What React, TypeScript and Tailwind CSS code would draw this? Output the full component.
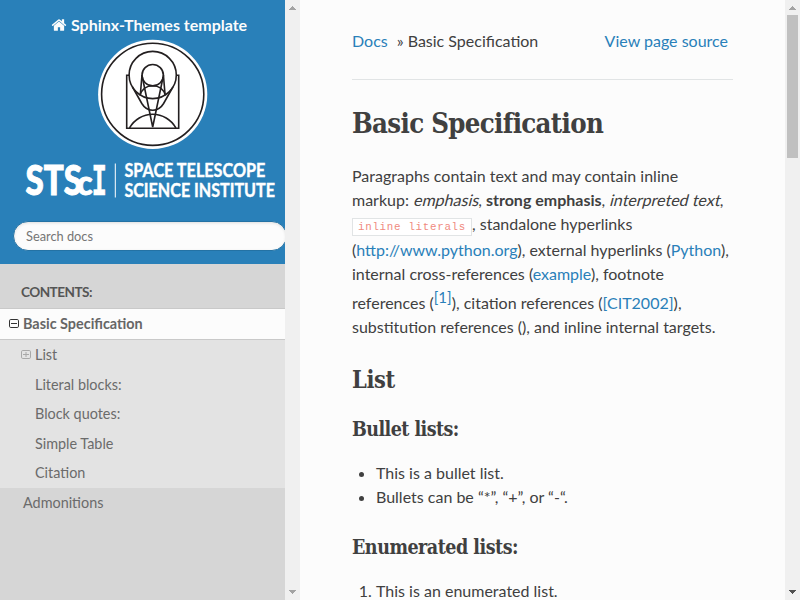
import React from "react";

const HOME_PATH =
  "M1472 992v480q0 26-19 45t-45 19h-384v-384h-256v384h-384q-26 0-45-19t-19-45v-480q0-1 .5-3t.5-3l575-474 575 474q1 2 1 6zm223-69l-62 74q-8 9-21 11h-3q-13 0-21-7l-692-577-692 577q-12 8-24 7-13-2-21-11l-62-74q-8-10-7-23.5t11-21.5l719-599q32-26 76-26t76 26l244 204v-195q0-14 9-23t23-9h192q14 0 23 9t9 23v408l219 182q10 8 11 21.5t-7 23.5z";

function Logo() {
  return (
    <svg className="ml-[25px] block h-[162px] w-[251px] shrink-0 overflow-visible" viewBox="25 39 251 162">
      <circle cx="152.7" cy="94.3" r="54.6" fill="#fff" />
      <g fill="none" stroke="#231f20" strokeWidth="1.6">
        <circle cx="152.7" cy="94.3" r="51.1" />
        <circle cx="152.7" cy="75" r="23.6" />
        <circle cx="152.7" cy="75.2" r="10.7" />
        <path d="M129.3 75.3H126.7V128.2H178.7V75.3H176.1" />
        <path d="M129.5 128 A26.5 26.5 0 0 1 175.9 128" />
        <path d="M142 75 L140.3 95 M163.4 75 L165.1 95" />
        <path d="M142.3 77 L152.7 127 L163.1 77" />
        <path d="M139.8 95.5 Q143 85.8 152.7 85.8 Q162.4 85.8 165.6 95.5" />
        <path d="M132.5 87 L141.8 103.5 Q145.8 110.2 152.7 110.2 Q159.6 110.2 163.6 103.5 L172.9 87" />
      </g>
      <g fill="#fff" stroke="#fff" fontFamily="Lato, sans-serif">
        <text x="25.4" y="195.2" fontSize="41" fontWeight="900" strokeWidth="1" textLength="56.5" lengthAdjust="spacingAndGlyphs">STS</text>
        <text x="77" y="195.2" fontSize="34" fontWeight="900" strokeWidth="1" textLength="15.5" lengthAdjust="spacingAndGlyphs">c</text>
        <text x="91.5" y="195.2" fontSize="40.5" fontWeight="700" strokeWidth="0.5" fontFamily="DejaVu Sans Mono, monospace" textLength="15.5" lengthAdjust="spacingAndGlyphs">I</text>
        <rect x="114.8" y="163.5" width="1" height="34" stroke="none" />
        <text x="124.4" y="177.2" fontSize="19.2" fontWeight="700" strokeWidth="0.4" textLength="141" lengthAdjust="spacingAndGlyphs">SPACE TELESCOPE</text>
        <text x="124.4" y="197.4" fontSize="19.2" fontWeight="700" strokeWidth="0.4" textLength="150.5" lengthAdjust="spacingAndGlyphs">SCIENCE INSTITUTE</text>
      </g>
    </svg>
  );
}

function Arrow({ down = false, dark = false }: { down?: boolean; dark?: boolean }) {
  return (
    <svg className="h-[15px] w-[15px] shrink-0" viewBox="0 0 15 15" shapeRendering="crispEdges">
      <path
        d={down ? "M4 5H11V6H10V7H9V8H8V9H7V8H6V7H5V6H4Z" : "M7 6H8V7H9V8H10V9H11V10H4V9H5V8H6V7H7Z"}
        fill={dark ? "#505050" : "#a3a3a3"}
      />
    </svg>
  );
}

function ScrollBar({ thumb = false }: { thumb?: boolean }) {
  return (
    <div className="flex h-full w-[15px] shrink-0 flex-col justify-between bg-[#f0f0f0]">
      <div className="flex flex-col">
        <Arrow />
        {thumb && <div className="ml-[2px] h-[143px] w-[11px] bg-[#c0c0c0]" />}
      </div>
      <Arrow down dark={thumb} />
    </div>
  );
}

function Toggle({ plus = false }: { plus?: boolean }) {
  return (
    <svg className="h-[10px] w-[10px] shrink-0" viewBox="0 0 10 10" fill="none" stroke={plus ? "#a8a8a8" : "#333"}>
      <rect x="0.5" y="0.5" width="9" height="8" rx="1.3" />
      <path d={plus ? "M2 4.5H8M5 2V7" : "M2 4.5H8"} />
    </svg>
  );
}

function Sidebar() {
  return (
    <nav className="flex h-full w-[285px] shrink-0 flex-col overflow-hidden bg-[#d6d6d6] text-[14.4px] leading-[18px] text-[#6b6b6b]">
      <div className="flex h-[264px] shrink-0 flex-col bg-[#2980b9]">
        <div className="flex h-[39px] shrink-0 items-center pl-[51px] pt-[10px] text-[16px] font-bold leading-6 text-[#fcfcfc]">
          <svg className="mr-[4px] h-[16px] w-[16px]" viewBox="0 0 1792 1792" fill="currentColor">
            <path d={HOME_PATH} />
          </svg>
          Sphinx-Themes template
        </div>
        <Logo />
        <input
          className="ml-[13px] mt-[20px] h-[30px] w-[274px] shrink-0 rounded-full border border-[#2472a4] bg-[#fcfcfc] px-[12px] text-[12.8px] shadow-[inset_0_1px_3px_#ddd] outline-none placeholder:text-[#757575]"
          placeholder="Search docs"
        />
      </div>
      <p className="flex h-[44px] shrink-0 items-center pl-[21px] pt-[12px] text-[13.6px] font-bold tracking-[-0.55px] text-[#555]">CONTENTS:</p>
      <div className="flex h-[32px] shrink-0 items-center border-y border-[#c9c9c9] bg-[#fcfcfc] pl-[9px] font-bold text-[#666]">
        <Toggle />
        <span className="ml-[4px]">Basic Specification</span>
      </div>
      <ul className="h-[148px] shrink-0 bg-[#e3e3e3]">
        <li className="flex h-[30px] items-center pl-[21px]">
          <Toggle plus />
          <span className="ml-[4px]">List</span>
        </li>
        {["Literal blocks:", "Block quotes:", "Simple Table", "Citation"].map((t) => (
          <li key={t} className="flex h-[29.5px] items-center pl-[35px]">{t}</li>
        ))}
      </ul>
      <div className="flex h-[30px] items-center pl-[23px]">Admonitions</div>
    </nav>
  );
}

function A({ children }: { children: React.ReactNode }) {
  return <a className="text-[#2980b9]">{children}</a>;
}

function Em({ children }: { children: React.ReactNode }) {
  return <em className="inline-block origin-[0_18px] -skew-x-[14deg] not-italic">{children}</em>;
}

export default function App() {
  return (
    <div className="flex h-[600px] w-[800px] overflow-hidden bg-[#fcfcfc] font-[Lato,sans-serif] text-[16px] leading-6 text-[#404040]">
      <Sidebar />
      <ScrollBar />
      <main className="h-full w-[485px] shrink-0 overflow-hidden pl-[52px] pr-[52px]">
        <div className="flex h-[80px] justify-between border-b border-[#e1e4e5] pr-[5px] pt-[29px]">
          <div>
            <span className="mr-[9px]"><A>Docs</A></span>» Basic Specification
          </div>
          <A>View page source</A>
        </div>
        <h1 className="mt-[25px] h-[59px] whitespace-nowrap font-['Roboto_Slab','DejaVu_Serif_Condensed','DejaVu_Serif',serif] text-[27.3px] font-bold leading-[37px] tracking-[-0.67px]">Basic Specification</h1>
        <p className="whitespace-nowrap">
          <span className="block h-6">Paragraphs contain text and may contain inline</span>
          <span className="block h-6">markup: <Em>emphasis</Em>, <strong>strong emphasis</strong>, <Em>interpreted text</Em>,</span>
          <span className="block h-[26px]">
            <code className="border border-[#e1e4e5] bg-white px-[5px] py-[2px] font-['Liberation_Mono',monospace] text-[10.8px] tracking-[0.72px] text-[#f08a80]">inline literals</code>, standalone hyperlinks
          </span>
          <span className="block h-6">(<A>http://www.python.org</A>), external hyperlinks (<A>Python</A>),</span>
          <span className="block h-[29px]">internal cross-references (<A>example</A>), footnote</span>
          <span className="block h-6">references (<span className="relative -top-[6px] text-[15px] leading-none"><A>[1]</A></span>), citation references (<A>[CIT2002]</A>),</span>
          <span className="block h-6">substitution references (), and inline internal targets.</span>
        </p>
        <h2 className="mt-[25px] h-[53px] font-['Roboto_Slab','DejaVu_Serif_Condensed','DejaVu_Serif',serif] text-[23.4px] font-bold leading-[32px] tracking-[-0.4px]">List</h2>
        <h3 className="h-[44px] font-['Roboto_Slab','DejaVu_Serif_Condensed','DejaVu_Serif',serif] text-[19.5px] font-bold leading-[26px] tracking-[-0.55px]">Bullet lists:</h3>
        <ul className="mb-[26px] list-disc pl-[24px]">
          <li>This is a bullet list.</li>
          <li>Bullets can be “*”, “+”, or “-“.</li>
        </ul>
        <h3 className="h-[44px] font-['Roboto_Slab','DejaVu_Serif_Condensed','DejaVu_Serif',serif] text-[19.5px] font-bold leading-[26px] tracking-[-0.5px]">Enumerated lists:</h3>
        <ol className="list-decimal pl-[24px]">
          <li>This is an enumerated list.</li>
        </ol>
      </main>
      <ScrollBar thumb />
    </div>
  );
}
